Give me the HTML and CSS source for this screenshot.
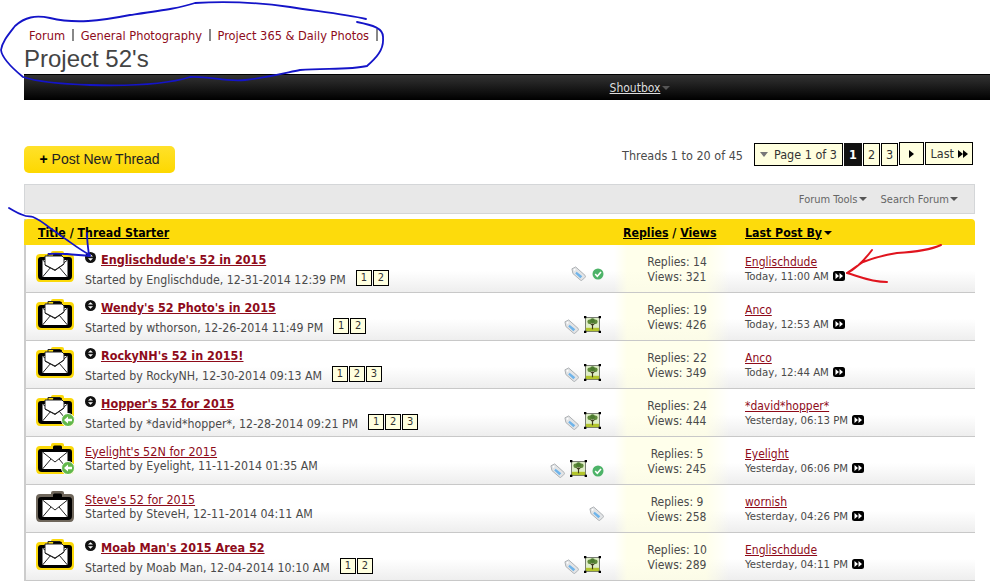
FILE: index.html
```html
<!DOCTYPE html>
<html lang="en">
<head>
<meta charset="utf-8">
<title>Project 52's</title>
<link rel="stylesheet" href="styles.css">
</head>
<body>
<svg class="defs" width="0" height="0" aria-hidden="true">
  <defs>
    <symbol id="cam" viewBox="0 0 40 33">
      <path d="M16 4 V3 Q16 1 18 1 H27 Q29 1 29 3 V4 H35 Q39 4 39 8 V27 Q39 32 35 32 H5 Q1 32 1 27 V8 Q1 4 5 4 Z" fill="var(--rim)"/>
      <path d="M18 7 V5 Q18 3.500 19.500 3.500 H25.500 Q27 3.500 27 5 V7 H34 Q37 7 37 10 V26 Q37 30 33 30 H7 Q3 30 3 26 V10 Q3 7 6 7 Z" fill="#000"/>
      <rect x="7.500" y="10" width="25" height="17" fill="#fff"/>
      <path d="M7.500 10 L20 20 L32.500 10 M7.500 27 L16 17 M32.500 27 L24 17" fill="none" stroke="#222" stroke-width="1"/>
    </symbol>
    <symbol id="cam-pages" viewBox="0 0 40 33">
      <use href="#cam"/>
      <path d="M10 15 V6 H27 L29 8 V14 L20 20 Z" fill="#fff" stroke="#222" stroke-width="1"/>
      <path d="M13 6 V3.500 H25 M10 15 L20 20.500 L29 14" fill="none" stroke="#222" stroke-width="1"/>
    </symbol>
    <symbol id="tag" viewBox="0 0 16 16">
      <path d="M1 3 L5 1 L15 10 Q16 11 15 12 L12 15 Q11 16 10 15 L2 8 Z" fill="#e2e4e6" stroke="#a9adb0"/>
      <path d="M6 6 L12 11 L10 13 L4.500 8 Z" fill="#6fb4ea"/>
      <circle cx="3.800" cy="4" r="1" fill="#fff"/>
    </symbol>
    <symbol id="check" viewBox="0 0 12 12">
      <circle cx="6" cy="6" r="5.500" fill="#4db368"/>
      <path d="M3.200 6 L5.300 8.200 L9 4" fill="none" stroke="#fff" stroke-width="1.600"/>
    </symbol>
    <symbol id="pic" viewBox="0 0 18 18">
      <rect x="1.500" y="1.500" width="15" height="15" fill="#dfeec8" stroke="#222" stroke-width=".6"/>
      <rect x="2" y="12.500" width="14" height="3.500" fill="#b3c52c"/>
      <path d="M9 14 V8 M9 10 L6 7 M9 10 L12 7" stroke="#3d3a20" stroke-width="1.200" fill="none"/>
      <circle cx="6" cy="6" r="2.400" fill="#5f8a3a"/>
      <circle cx="12" cy="6" r="2.400" fill="#5f8a3a"/>
      <circle cx="9" cy="5" r="2.600" fill="#4a7a2e"/>
      <path d="M0 0H2.500V2.500H0Z M15.500 0H18V2.500H15.500Z M0 15.500H2.500V18H0Z M15.500 15.500H18V18H15.500Z" fill="#000"/>
    </symbol>
    <symbol id="bullet" viewBox="0 0 11 11">
      <circle cx="5.500" cy="5.500" r="5.500" fill="#111"/>
      <path d="M3 4.500 H8 L5.500 2.200 Z M3 6.200 H8 L5.500 8.800 Z" fill="#fff"/>
    </symbol>
    <symbol id="go" viewBox="0 0 12 10">
      <rect width="12" height="10" rx="2.500" fill="#000"/>
      <path d="M2.500 2 L6 5 L2.500 8 Z M6.500 2 L10 5 L6.500 8 Z" fill="#fff"/>
    </symbol>
    <symbol id="moved" viewBox="0 0 14 14">
      <circle cx="7" cy="7" r="6.500" fill="#62b84a" stroke="#fff"/>
      <path d="M3 7 L7 3.500 V5.800 H11 V8.200 H7 V10.500 Z" fill="#fff"/>
    </symbol>
  </defs>
</svg>

<div class="page">
  <nav class="crumbs">
    <a class="crumb">Forum</a><a class="crumb">General Photography</a><a class="crumb">Project 365 &amp; Daily Photos</a>
  </nav>
  <h1 class="title">Project 52's</h1>
  <div class="navbar"><a class="shout">Shoutbox</a><span class="shout-caret"></span></div>

  <div class="actions">
    <a class="newthread"><span class="plus">+</span> Post New Thread</a>
    <div class="pagination">
      <span class="count">Threads 1 to 20 of 45</span>
      <span class="pg pg-label"><span class="pg-caret"></span>Page 1 of 3</span>
      <span class="pg pg-current">1</span>
      <span class="pg pg-num">2</span>
      <span class="pg pg-num">3</span>
      <span class="pg pg-next"><span class="tri"></span></span>
      <span class="pg pg-last">Last&nbsp;<span class="tri"></span><span class="tri tri-b"></span></span>
    </div>
  </div>

  <div class="toolbar">
    <span class="tool">Forum Tools<span class="caret"></span></span>
    <span class="tool">Search Forum<span class="caret"></span></span>
  </div>

  <div class="threads">
    <div class="thead">
      <div class="th-title"><a>Title</a> / <a>Thread Starter</a></div>
      <div class="th-stats"><a>Replies</a> / <a>Views</a></div>
      <div class="th-last"><a>Last Post By</a><span class="caret caret-dark"></span></div>
    </div>

    <div class="row">
      <svg class="status"><use href="#cam-pages"/></svg>
      <div class="info">
        <div class="ttl"><svg class="bullet"><use href="#bullet"/></svg><a class="strong">Englischdude's 52 in 2015</a></div>
        <div class="sub">Started by Englischdude, 12-31-2014 12:39 PM<span class="pl">1</span><span class="pl">2</span></div>
      </div>
      <div class="marks"><svg class="i-tag"><use href="#tag"/></svg><svg class="i-check"><use href="#check"/></svg></div>
      <div class="stats">Replies: 14<br>Views: 321</div>
      <div class="last"><a>Englischdude</a><div class="when">Today, 11:00 AM<svg class="go"><use href="#go"/></svg></div></div>
    </div>

    <div class="row">
      <svg class="status"><use href="#cam-pages"/></svg>
      <div class="info">
        <div class="ttl"><svg class="bullet"><use href="#bullet"/></svg><a class="strong">Wendy's 52 Photo's in 2015</a></div>
        <div class="sub">Started by wthorson, 12-26-2014 11:49 PM<span class="pl">1</span><span class="pl">2</span></div>
      </div>
      <div class="marks marks-pic"><svg class="i-tag"><use href="#tag"/></svg><svg class="i-pic"><use href="#pic"/></svg></div>
      <div class="stats">Replies: 19<br>Views: 426</div>
      <div class="last"><a>Anco</a><div class="when">Today, 12:53 AM<svg class="go"><use href="#go"/></svg></div></div>
    </div>

    <div class="row">
      <svg class="status"><use href="#cam-pages"/></svg>
      <div class="info">
        <div class="ttl"><svg class="bullet"><use href="#bullet"/></svg><a class="strong">RockyNH's 52 in 2015!</a></div>
        <div class="sub">Started by RockyNH, 12-30-2014 09:13 AM<span class="pl">1</span><span class="pl">2</span><span class="pl">3</span></div>
      </div>
      <div class="marks marks-pic"><svg class="i-tag"><use href="#tag"/></svg><svg class="i-pic"><use href="#pic"/></svg></div>
      <div class="stats">Replies: 22<br>Views: 349</div>
      <div class="last"><a>Anco</a><div class="when">Today, 12:44 AM<svg class="go"><use href="#go"/></svg></div></div>
    </div>

    <div class="row">
      <div class="status-wrap"><svg class="status"><use href="#cam-pages"/></svg><svg class="moved"><use href="#moved"/></svg></div>
      <div class="info">
        <div class="ttl"><svg class="bullet"><use href="#bullet"/></svg><a class="strong">Hopper's 52 for 2015</a></div>
        <div class="sub">Started by *david*hopper*, 12-28-2014 09:21 PM<span class="pl">1</span><span class="pl">2</span><span class="pl">3</span></div>
      </div>
      <div class="marks marks-pic"><svg class="i-tag"><use href="#tag"/></svg><svg class="i-pic"><use href="#pic"/></svg></div>
      <div class="stats">Replies: 24<br>Views: 444</div>
      <div class="last"><a>*david*hopper*</a><div class="when">Yesterday, 06:13 PM<svg class="go"><use href="#go"/></svg></div></div>
    </div>

    <div class="row">
      <div class="status-wrap"><svg class="status"><use href="#cam"/></svg><svg class="moved"><use href="#moved"/></svg></div>
      <div class="info info-plain">
        <div class="ttl"><a>Eyelight's 52N for 2015</a></div>
        <div class="sub">Started by Eyelight, 11-11-2014 01:35 AM</div>
      </div>
      <div class="marks marks-pic"><svg class="i-tag"><use href="#tag"/></svg><svg class="i-pic"><use href="#pic"/></svg><svg class="i-check"><use href="#check"/></svg></div>
      <div class="stats">Replies: 5<br>Views: 245</div>
      <div class="last"><a>Eyelight</a><div class="when">Yesterday, 06:06 PM<svg class="go"><use href="#go"/></svg></div></div>
    </div>

    <div class="row">
      <svg class="status status-grey"><use href="#cam"/></svg>
      <div class="info info-plain">
        <div class="ttl"><a>Steve's 52 for 2015</a></div>
        <div class="sub">Started by SteveH, 12-11-2014 04:11 AM</div>
      </div>
      <div class="marks"><svg class="i-tag"><use href="#tag"/></svg></div>
      <div class="stats">Replies: 9<br>Views: 258</div>
      <div class="last"><a>wornish</a><div class="when">Yesterday, 04:26 PM<svg class="go"><use href="#go"/></svg></div></div>
    </div>

    <div class="row">
      <svg class="status"><use href="#cam-pages"/></svg>
      <div class="info">
        <div class="ttl"><svg class="bullet"><use href="#bullet"/></svg><a class="strong">Moab Man's 2015 Area 52</a></div>
        <div class="sub">Started by Moab Man, 12-04-2014 10:10 AM<span class="pl">1</span><span class="pl">2</span></div>
      </div>
      <div class="marks marks-pic"><svg class="i-tag"><use href="#tag"/></svg><svg class="i-pic"><use href="#pic"/></svg></div>
      <div class="stats">Replies: 10<br>Views: 289</div>
      <div class="last"><a>Englischdude</a><div class="when">Yesterday, 04:11 PM<svg class="go"><use href="#go"/></svg></div></div>
    </div>
  </div>
</div>

<svg class="scribble" width="990" height="584" viewBox="0 0 990 584" aria-hidden="true">
  <g fill="none" stroke="#1414c8" stroke-width="1.800" stroke-linecap="round" stroke-linejoin="round">
    <path d="M366 19 C345 14 315 11 290 7 C262 3 225 1 195 3 C180 8 165 10 130 15 C100 21 75 24 50 18 C35 15 25 17 15 26 C8 35 2 42 1 50 C2 58 12 68 23 77 C35 81 60 84 90 85 C125 86 165 85 190 77 C210 76 225 82 245 80 C265 78 285 73 300 70 C325 68 350 70 367 66 C376 58 384 50 383 38 C384 28 372 25 357 22"/>
    <path d="M9 208 C14 211 19 214 23 215 C27 217 30 216 33 217 C38 219 45 224 50 228 C56 232 62 237 67 240 C74 245 82 251 90 255 M49 254 C56 253 62 254 67 254 C75 255 82 255 90 256 M87 233 C87 240 88 248 89 255"/>
  </g>
  <g fill="none" stroke="#e0141e" stroke-width="2" stroke-linecap="round" stroke-linejoin="round">
    <path d="M941 245 C930 250 915 252 897 253 C885 255 873 258 863 262 C857 266 852 270 847 273 C858 276 870 282 887 282 M847 273 C858 268 866 258 872 250"/>
  </g>
</svg>
</body>
</html>
```

FILE: styles.css
```css
* { box-sizing: border-box; }
html, body { margin: 0; padding: 0; }
body {
  width: 990px;
  height: 584px;
  overflow: hidden;
  background: #fff;
  font-family: "DejaVu Sans Condensed", "DejaVu Sans", sans-serif;
  font-size: 11.5px;
  color: #4a4a4a;
}
.defs { position: absolute; }
.scribble { position: absolute; left: 0; top: 0; pointer-events: none; }
.page { padding: 27px 0 0 24px; }

.crumbs { display: flex; height: 16px; padding-left: 5px; align-items: center; }
.crumb { color: #8e0b1a; font-size: 12.700px; }
.crumb::after { content: ""; display: inline-block; width: 1.500px; height: 12px; background: #888; margin: 0 7px 0 7px; vertical-align: -1px; }

.title {
  margin: 0;
  height: 31px;
  font: 400 24px/31px "Liberation Sans", sans-serif;
  color: #444;
}

.navbar {
  height: 26px;
  display: flex;
  justify-content: center;
  align-items: center;
  padding-left: 266px;
  background: linear-gradient(#333, #000);
  border-top: 1px solid #000;
}
.shout { color: #ddd; text-decoration: underline; font-size: 12px; }
.shout-caret { width: 0; height: 0; border: 4px solid transparent; border-top: 4px solid #555; border-bottom: 0; margin-left: 2px; }

.actions {
  height: 84px;
  padding: 42px 17px 0 0;
  display: flex;
  justify-content: space-between;
  align-items: flex-start;
}
.newthread {
  width: 151px;
  height: 27px;
  margin-top: 4px;
  border-radius: 5px;
  background: linear-gradient(#ffe12a, #fdd800);
  text-align: center;
  font: 14px/27px "Liberation Sans", sans-serif;
  color: #222;
}
.plus { font-weight: 700; color: #000; }
.pagination { display: flex; align-items: flex-start; gap: 1px; }
.count { margin-right: 10px; line-height: 27px; font-size: 12.500px; }
.pg {
  display: flex;
  align-items: center;
  justify-content: center;
  height: 23px;
  margin-top: 1px;
  border: 1px solid #000;
  background: #ffffdf;
  color: #333;
  font-size: 12.500px;
}
.pg-label { width: 89px; }
.pg-caret { width: 0; height: 0; border: 4px solid transparent; border-top: 5px solid #777; border-bottom: 0; margin-right: 6px; }
.pg-current { width: 18px; background: #111; color: #fff; font-weight: 700; border-color: #111; }
.pg-num { width: 17px; }
.pg-next { width: 25px; margin-top: 0; }
.pg-last { width: 48px; margin-top: 0; }
.tri { display: inline-block; width: 0; height: 0; border: 4px solid transparent; border-left: 5px solid #000; border-right: 0; }
.tri-b { margin-left: 0; }

.toolbar {
  width: 951px;
  height: 30px;
  display: flex;
  justify-content: flex-end;
  align-items: center;
  gap: 14px;
  padding-right: 16px;
  background: #e8e8e8;
  border: 1px solid #d4d6d8;
  color: #666;
}
.tool { display: inline-flex; align-items: center; font-size: 11px; }
.caret { width: 0; height: 0; border: 4px solid transparent; border-top: 4px solid #555; border-bottom: 0; margin-left: 1px; }
.caret-dark { border-top-color: #000; margin-left: 2px; }

.threads { width: 951px; margin-top: 5px; border-left: 2px solid #ccc; }
.thead {
  margin-left: -2px;
  height: 26px;
  padding-top: 1px;
  display: grid;
  grid-template-columns: 599px 122px 1fr;
  align-items: center;
  background: #fddb0c;
  border-radius: 4px 4px 0 0;
  font-weight: 700;
  font-size: 12.250px;
  color: #000;
}
.thead a { text-decoration: underline; }
.th-title { padding-left: 14px; }
.th-last { display: flex; align-items: center; }

.row {
  position: relative;
  height: 48px;
  display: grid;
  grid-template-columns: 59px 1fr auto 131px 230px;
  background: linear-gradient(#fff 55%, #eee);
  border-bottom: 1px solid #c8c8c8;
}
.status { display: block; width: 40px; height: 33px; margin: 5px 0 0 9px; --rim: #fbd90a; }
.status-grey { --rim: #6f675c; }
.status-wrap { position: relative; }
.moved { position: absolute; left: 35px; top: 24px; width: 14px; height: 14px; }

.info { padding-top: 5px; min-width: 0; }
.ttl { display: flex; align-items: center; height: 18px; }
.ttl a { color: #8e0b1a; text-decoration: underline; font-size: 12.500px; }
.ttl a.strong { font-weight: 700; font-size: 12.500px; }
.bullet { width: 11px; height: 11px; margin: -3px 5px 0 0; flex: none; }
.sub { display: flex; align-items: center; height: 20px; margin-top: 2px; font-size: 12.250px; }
.info-plain { padding-top: 5px; }
.info-plain .sub { margin-top: -4px; }
.pl {
  align-self: flex-start;
  width: 16px;
  height: 16px;
  margin-left: 1px;
  border: 1px solid #000;
  background: #ffffdf;
  color: #333;
  font-size: 11px;
  line-height: 14px;
  text-align: center;
}
.sub > .pl:first-of-type { margin-left: 10px; }

.marks { display: flex; align-items: flex-end; gap: 5px; padding: 0 10px 11px 0; }
.marks-pic { padding-bottom: 6px; }
.i-tag { width: 15px; height: 15px; }
.i-check { width: 12px; height: 12px; margin-bottom: 1px; margin-left: 1px; }
.i-pic { width: 17px; height: 17px; margin-bottom: 1px; margin-right: 3px; }
.i-pic + .i-check { margin-left: 0; }
.marks .i-pic:not(:last-child) { margin-right: 0; }

.stats {
  padding: 10px 5px 0 0;
  text-align: center;
  line-height: 15px;
  font-size: 12px;
  background: linear-gradient(90deg, rgba(255,255,230,0), rgba(255,255,230,.8) 10%, rgba(255,255,230,.8) 70%, rgba(255,255,230,0) 88%);
}
.last { padding-top: 10px; }
.last a { color: #8e0b1a; text-decoration: underline; font-size: 12px; line-height: 14px; display: block; }
.when { font-size: 11.300px; line-height: 15px; display: flex; align-items: center; }
.go { width: 12px; height: 10px; margin: -2px 0 0 4px; }
```
